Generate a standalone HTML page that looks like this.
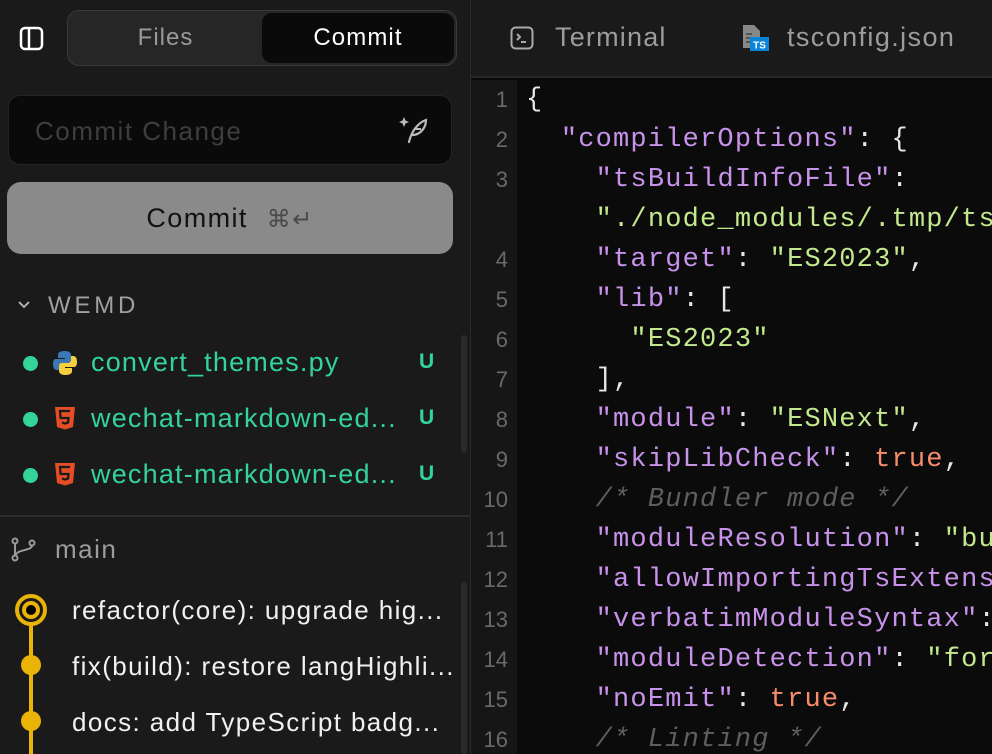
<!DOCTYPE html>
<html><head><meta charset="utf-8"><style>
*{margin:0;padding:0;box-sizing:border-box}
body{width:992px;height:754px;overflow:hidden;background:#1a1a1b;font-family:"Liberation Sans",sans-serif;position:relative}
.left{position:absolute;left:0;top:0;width:470px;height:754px;background:#1a1a1b;overflow:hidden}
.right{position:absolute;left:470px;top:0;width:522px;height:754px;background:#0b0b0b;border-left:1px solid #2a2a2a;overflow:hidden}
.abs{position:absolute}
.seg{left:67px;top:10px;width:390px;height:56px;border:1.5px solid #3a3a3a;border-radius:12px;background:#262626}
.seg .f{position:absolute;left:0;top:0;width:195px;height:53px;line-height:53px;text-align:center;color:#9a9a9a;font-size:24px;letter-spacing:1px}
.seg .c{position:absolute;left:194px;top:2px;width:192px;height:50px;line-height:50px;text-align:center;color:#fff;font-size:24px;background:#0a0a0a;border-radius:10px;letter-spacing:1.1px}
.input{left:8px;top:95px;width:444px;height:70px;background:#0a0a0a;border:1px solid #252525;border-radius:12px;color:#3e3e3e;font-size:26px;line-height:70px;padding-left:26px;letter-spacing:1.5px}
.btn{left:7px;top:182px;width:446px;height:72px;background:#8a8a8a;border-radius:14px;text-align:center;line-height:72px;font-size:27px;color:#111;letter-spacing:1.4px}
.file{left:0;height:56px;width:460px;font-size:27px;color:#34d399;letter-spacing:1.2px}
.dot{position:absolute;left:23px;width:15px;height:15px;border-radius:50%;background:#34d399}
.u{position:absolute;left:419px;font-size:21px;font-weight:bold;color:#34d399;letter-spacing:0}
.code{left:0;top:80px;width:522px}
.ln{position:absolute;left:0;width:46px;height:674px;background:#161616;top:80px}
.row{position:absolute;left:0;height:40px;line-height:40px;white-space:pre;width:522px}
.row .n{position:absolute;left:0;width:37px;text-align:right;color:#6a6a6a;font-size:22px;font-family:"Liberation Sans",sans-serif}
.row .t{position:absolute;left:55px;font-family:"Liberation Mono",monospace;font-size:27px;letter-spacing:1.2px;color:#e6e6e6}
.k{color:#c792ea}.s{color:#c3e88d}.b{color:#f78c6c}.cm{color:#5e5e5e;font-style:italic}
.commit{left:72px;font-size:26px;color:#f0f0f0;letter-spacing:1.4px;white-space:nowrap}
</style></head><body>
<div class="left">
  <svg class="abs" style="left:19px;top:26px" width="26" height="25" viewBox="0 0 26 25"><rect x="2" y="2" width="21" height="21" rx="4" fill="none" stroke="#fff" stroke-width="2.5"/><line x1="10" y1="2" x2="10" y2="23" stroke="#fff" stroke-width="2.5"/></svg>
  <div class="abs seg"><div class="f">Files</div><div class="c">Commit</div></div>
  <div class="abs input">Commit Change
    <svg class="abs" style="left:390px;top:19px" width="32" height="30" viewBox="0 0 32 30"><path d="M5 2 L6.5 5.5 L10 7 L6.5 8.5 L5 12 L3.5 8.5 L0 7 L3.5 5.5Z" fill="#bbb"/><path d="M10 27 C12 18 18 8 27 5 C27 12 22 20 13 20" fill="none" stroke="#bbb" stroke-width="2.2" stroke-linecap="round"/><path d="M16 14 L22 14" stroke="#bbb" stroke-width="2"/></svg>
  </div>
  <div class="abs btn">Commit <span style="color:#4a4a4a;font-size:24px;margin-left:10px">⌘↵</span></div>
  <svg class="abs" style="left:17px;top:300px" width="14" height="10" viewBox="0 0 14 10"><path d="M2 2 L7 7 L12 2" fill="none" stroke="#aaa" stroke-width="2"/></svg>
  <div class="abs" style="left:48px;top:292px;font-size:24px;color:#a0a0a0;letter-spacing:3.8px">WEMD</div>
  <div class="abs" style="left:461px;top:335px;width:6px;height:118px;background:#2a2a2a;border-radius:3px"></div>

  <div class="abs file" style="top:348px"><div class="dot" style="top:8px"></div>
    <svg class="abs" style="left:52px;top:2px" width="26" height="26" viewBox="0 0 26 26"><path d="M13 1 C6 1 6 4 6 5 V8 H13 V9 H4 C1 9 1 13 1 14 C1 19 3 20 5 20 H7 V16 C7 14 9 13 10 13 H16 C18 13 19 12 19 10 V5 C19 3 17 1 13 1Z" fill="#3b77b4"/><path d="M13 25 C20 25 20 22 20 21 V18 H13 V17 H22 C25 17 25 13 25 12 C25 7 23 6 21 6 H19 V10 C19 12 17 13 16 13 H10 C8 13 7 14 7 16 V21 C7 23 9 25 13 25Z" fill="#f6cf3e"/></svg>
    <span class="abs" style="left:91px;top:-1px">convert_themes.py</span><span class="u" style="top:2px">U</span></div>
  <div class="abs file" style="top:404px"><div class="dot" style="top:8px"></div>
    <svg class="abs" style="left:54px;top:2px" width="22" height="24" viewBox="0 0 22 24"><path d="M1 1 H21 L19 21 L11 23.5 L3 21Z" fill="#e44d26"/><path d="M16 5 H6 L6.6 12 H14.5 L14 16.5 L11 17.5 L8 16.5" fill="none" stroke="#1a1a1b" stroke-width="2.2"/></svg>
    <span class="abs" style="left:91px;top:-1px">wechat-markdown-ed...</span><span class="u" style="top:2px">U</span></div>
  <div class="abs file" style="top:460px"><div class="dot" style="top:8px"></div>
    <svg class="abs" style="left:54px;top:2px" width="22" height="24" viewBox="0 0 22 24"><path d="M1 1 H21 L19 21 L11 23.5 L3 21Z" fill="#e44d26"/><path d="M16 5 H6 L6.6 12 H14.5 L14 16.5 L11 17.5 L8 16.5" fill="none" stroke="#1a1a1b" stroke-width="2.2"/></svg>
    <span class="abs" style="left:91px;top:-1px">wechat-markdown-ed...</span><span class="u" style="top:2px">U</span></div>

  <div class="abs" style="left:0;top:515px;width:470px;height:2px;background:#2c2c2c"></div>
  <svg class="abs" style="left:11px;top:537px" width="26" height="26" viewBox="0 0 26 26"><g fill="none" stroke="#999" stroke-width="2"><circle cx="4" cy="4" r="2.5"/><circle cx="4" cy="21" r="2.5"/><circle cx="21" cy="6" r="2.5"/><path d="M4 6.5 V18.5 M21 8.5 C21 14 6 12 4.5 18.5"/></g></svg>
  <div class="abs" style="left:55px;top:534px;font-size:26px;color:#9c9c9c;letter-spacing:1.5px">main</div>
  <div class="abs" style="left:461px;top:582px;width:6px;height:172px;background:#2a2a2a;border-radius:3px"></div>
  <div class="abs" style="left:29px;top:608px;width:4px;height:146px;background:#e9b308"></div>
  <div class="abs" style="left:15px;top:594px;width:32px;height:32px;border-radius:50%;border:4px solid #e9b308;background:#1a1a1b"></div>
  <div class="abs" style="left:22px;top:601px;width:18px;height:18px;border-radius:50%;border:4px solid #e9b308;background:#000"></div>
  <div class="abs" style="left:21px;top:655px;width:20px;height:20px;border-radius:50%;background:#e9b308"></div>
  <div class="abs" style="left:21px;top:711px;width:20px;height:20px;border-radius:50%;background:#e9b308"></div>
  <div class="abs commit" style="top:595px">refactor(core): upgrade hig...</div>
  <div class="abs commit" style="top:651px">fix(build): restore langHighli...</div>
  <div class="abs commit" style="top:707px">docs: add TypeScript badg...</div>
</div>
<div class="right">
  <div class="abs" style="left:0;top:0;width:522px;height:78px;background:#1a1a1b;border-bottom:2px solid #262626"></div>
  <svg class="abs" style="left:39px;top:26px" width="24" height="24" viewBox="0 0 24 24"><rect x="1.5" y="1.5" width="21" height="21" rx="4" fill="none" stroke="#aaa" stroke-width="2"/><path d="M7 8 L10 11 L7 14 M11 16 H16" fill="none" stroke="#aaa" stroke-width="2"/></svg>
  <div class="abs" style="left:84px;top:22px;font-size:27px;color:#9c9c9c;letter-spacing:1.2px">Terminal</div>
  <svg class="abs" style="left:271px;top:24px" width="28" height="28" viewBox="0 0 28 28"><path d="M1 1 H12 L18 7 V24 H1Z" fill="#888"/><path d="M4 10 H10 M4 14 H10 M4 18 H10" stroke="#444" stroke-width="1.5"/><rect x="8" y="13" width="19" height="14" fill="#0a84d6"/><text x="17.5" y="24.5" font-size="10" font-weight="bold" fill="#fff" text-anchor="middle" font-family="Liberation Sans">TS</text></svg>
  <div class="abs" style="left:316px;top:22px;font-size:27px;color:#9c9c9c;letter-spacing:1.4px">tsconfig.json</div>
  <div class="ln"></div>
  <div class="abs code">
    <div class="row" style="top:0"><span class="n">1</span><span class="t">{</span></div>
    <div class="row" style="top:40px"><span class="n">2</span><span class="t">  <span class="k">"compilerOptions"</span>: {</span></div>
    <div class="row" style="top:80px"><span class="n">3</span><span class="t">    <span class="k">"tsBuildInfoFile"</span>:</span></div>
    <div class="row" style="top:120px"><span class="t">    <span class="s">"./node_modules/.tmp/tsconfig</span></span></div>
    <div class="row" style="top:160px"><span class="n">4</span><span class="t">    <span class="k">"target"</span>: <span class="s">"ES2023"</span>,</span></div>
    <div class="row" style="top:200px"><span class="n">5</span><span class="t">    <span class="k">"lib"</span>: [</span></div>
    <div class="row" style="top:240px"><span class="n">6</span><span class="t">      <span class="s">"ES2023"</span></span></div>
    <div class="row" style="top:280px"><span class="n">7</span><span class="t">    ],</span></div>
    <div class="row" style="top:320px"><span class="n">8</span><span class="t">    <span class="k">"module"</span>: <span class="s">"ESNext"</span>,</span></div>
    <div class="row" style="top:360px"><span class="n">9</span><span class="t">    <span class="k">"skipLibCheck"</span>: <span class="b">true</span>,</span></div>
    <div class="row" style="top:400px"><span class="n">10</span><span class="t">    <span class="cm">/* Bundler mode */</span></span></div>
    <div class="row" style="top:440px"><span class="n">11</span><span class="t">    <span class="k">"moduleResolution"</span>: <span class="s">"bundler"</span></span></div>
    <div class="row" style="top:480px"><span class="n">12</span><span class="t">    <span class="k">"allowImportingTsExtensions"</span></span></div>
    <div class="row" style="top:520px"><span class="n">13</span><span class="t">    <span class="k">"verbatimModuleSyntax"</span>: true</span></div>
    <div class="row" style="top:560px"><span class="n">14</span><span class="t">    <span class="k">"moduleDetection"</span>: <span class="s">"force"</span></span></div>
    <div class="row" style="top:600px"><span class="n">15</span><span class="t">    <span class="k">"noEmit"</span>: <span class="b">true</span>,</span></div>
    <div class="row" style="top:640px"><span class="n">16</span><span class="t">    <span class="cm">/* Linting */</span></span></div>
  </div>
</div>
</body></html>
